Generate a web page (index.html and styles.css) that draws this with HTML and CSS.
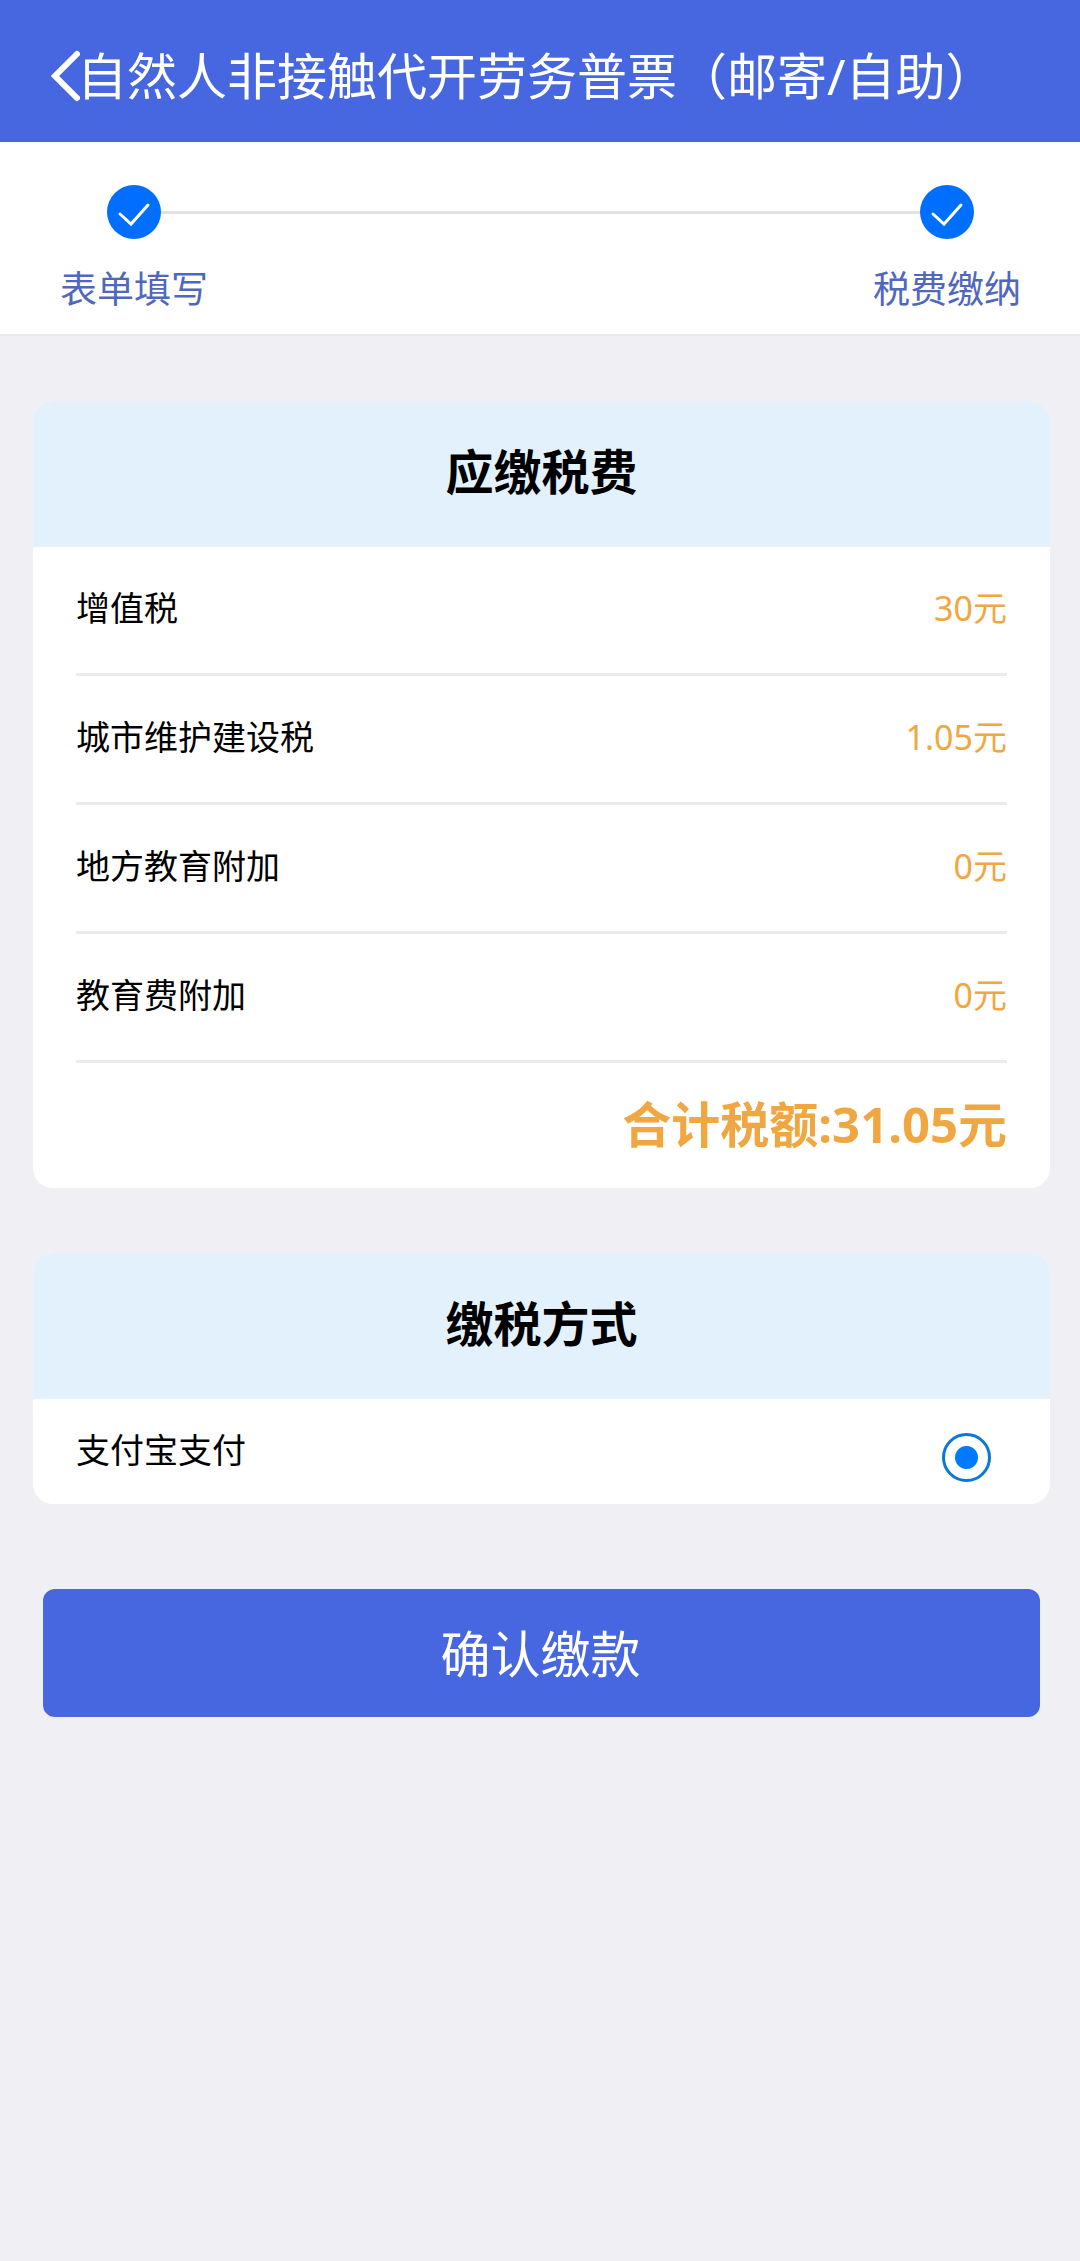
FILE: index.html
```html
<!DOCTYPE html>
<html lang="zh-CN">
<head>
  <meta charset="utf-8">
  <meta name="viewport" content="width=device-width, initial-scale=1">
  <title>自然人非接触代开劳务普票（邮寄/自助）</title>
  <link rel="stylesheet" href="styles.css">
</head>
<body>
  <header class="topbar">
    <button class="back" type="button" aria-label="返回">
      <svg class="back-icon" viewBox="0 0 30 52" fill="none" stroke="currentColor" stroke-width="6" stroke-linecap="round" stroke-linejoin="miter" aria-hidden="true">
        <path d="M27 4 L5 26 L27 48"/>
      </svg>
    </button>
    <h1 class="topbar-title">自然人非接触代开劳务普票（邮寄/自助）</h1>
  </header>

  <ol class="steps">
    <li class="step">
      <svg class="step-icon" viewBox="0 0 54 54" fill="none" aria-hidden="true">
        <circle cx="27" cy="27" r="27" fill="#006eff"/>
        <path d="M13 29 L24 39 L41 20" stroke="#fff" stroke-width="3" stroke-linecap="round"/>
      </svg>
      <span class="step-label">表单填写</span>
    </li>
    <li class="step">
      <svg class="step-icon" viewBox="0 0 54 54" fill="none" aria-hidden="true">
        <circle cx="27" cy="27" r="27" fill="#006eff"/>
        <path d="M13 29 L24 39 L41 20" stroke="#fff" stroke-width="3" stroke-linecap="round"/>
      </svg>
      <span class="step-label">税费缴纳</span>
    </li>
  </ol>

  <main class="content">
    <section class="card">
      <h2 class="card-title">应缴税费</h2>
      <div class="card-body">
        <table class="taxes">
          <tbody>
            <tr><th scope="row">增值税</th><td>30元</td></tr>
            <tr><th scope="row">城市维护建设税</th><td>1.05元</td></tr>
            <tr><th scope="row">地方教育附加</th><td>0元</td></tr>
            <tr><th scope="row">教育费附加</th><td>0元</td></tr>
          </tbody>
          <tfoot>
            <tr><td class="total" colspan="2">合计税额:31.05元</td></tr>
          </tfoot>
        </table>
      </div>
    </section>

    <section class="card">
      <h2 class="card-title">缴税方式</h2>
      <div class="card-body pay-option">
        <label class="pay-label" for="alipay">支付宝支付</label>
        <input class="radio" type="radio" id="alipay" name="pay" checked>
      </div>
    </section>

    <button class="confirm" type="button">确认缴款</button>
  </main>
</body>
</html>
```
FILE: styles.css
```css
* {
  box-sizing: border-box;
}

body {
  margin: 0;
  background: #efeff4;
  color: #000;
  font-family: "Noto Sans", "Noto Sans CJK SC", sans-serif;
  font-size: 34px;
  line-height: 48px;
}

/* Top bar */
.topbar {
  display: flex;
  align-items: center;
  height: 142px;
  padding: 10px 50px 0;
  background: #4767e0;
  color: #fff;
}

.back {
  display: flex;
  margin-right: -3px;
  padding: 0;
  border: 0;
  background: none;
  color: inherit;
}

.back-icon {
  width: 30px;
  height: 52px;
}

.topbar-title {
  margin: 0;
  font-size: 50px;
  font-weight: 400;
  line-height: 72px;
  white-space: nowrap;
}

/* Progress steps */
.steps {
  position: relative;
  display: flex;
  justify-content: space-between;
  margin: 0;
  padding: 43px 57px 21px 58px;
  background: #fff;
  border-bottom: 2px solid #e8e8ec;
  list-style: none;
}

.steps::before {
  content: "";
  position: absolute;
  top: 69px;
  left: 134px;
  right: 133px;
  height: 3px;
  background: #e2e2e4;
}

.step {
  position: relative;
  display: flex;
  flex-direction: column;
  align-items: center;
  gap: 26px;
  width: 152px;
}

.step-icon {
  width: 54px;
  height: 54px;
}

.step-label {
  color: #4f68bd;
  font-size: 37px;
  white-space: nowrap;
}

/* Cards */
.content {
  display: flex;
  flex-direction: column;
  gap: 65px;
  padding: 65px 30px 65px 33px;
}

.card {
  overflow: hidden;
  border-radius: 20px;
  background: #fff;
}

.card-title {
  margin: 0;
  padding: 35px 0 39px;
  background: #e3f1fc;
  font-size: 48px;
  font-weight: 700;
  line-height: 72px;
  text-align: center;
}

.card-body {
  padding: 0 43px;
}

.taxes {
  width: 100%;
  border-spacing: 0;
}

.taxes th,
.taxes td {
  height: 129px;
  padding: 0 0 4px;
  border-bottom: 3px solid #ebebeb;
  font-weight: 400;
  text-align: left;
}

.taxes td {
  color: #f0a742;
  text-align: right;
}

.taxes .total {
  height: 125px;
  border-bottom: 0;
  font-size: 49px;
  font-weight: 700;
}

.pay-option {
  display: flex;
  align-items: center;
  justify-content: space-between;
  height: 105px;
}

.pay-label {
  padding-bottom: 4px;
}

.radio {
  appearance: none;
  width: 49px;
  height: 49px;
  margin: 12px 16px 0 0;
  border: 3px solid #0a78d6;
  border-radius: 50%;
  background: radial-gradient(circle, #007aff 11px, transparent 12px);
}

.confirm {
  height: 128px;
  margin: 20px 10px 0;
  padding: 0 2px 4px 0;
  border: 0;
  border-radius: 12px;
  background: #4767e0;
  color: #fff;
  font-family: inherit;
  font-size: 50px;
}
```
